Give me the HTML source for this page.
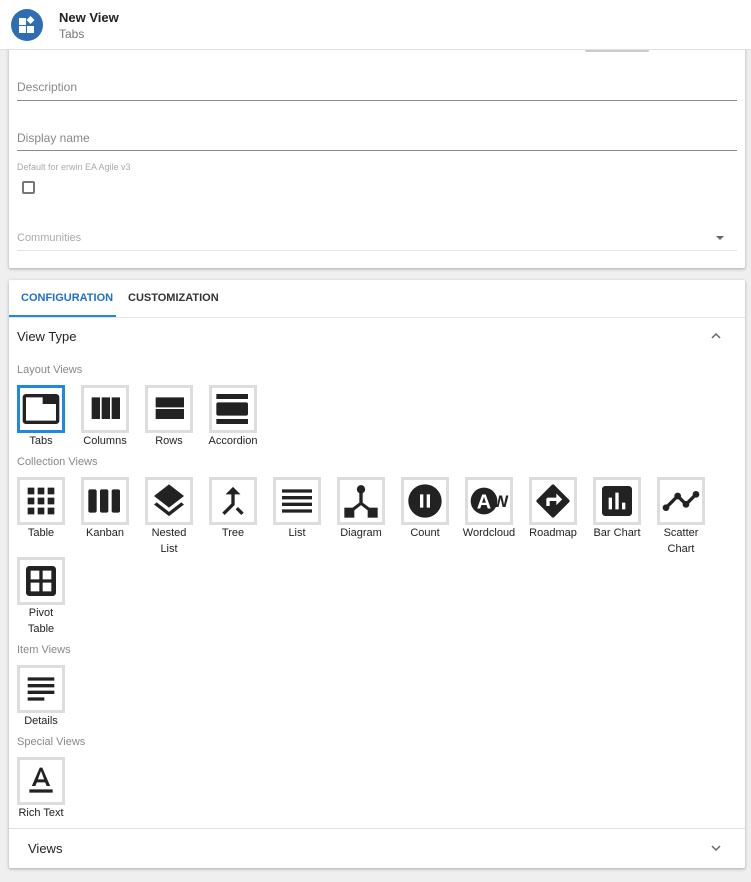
<!DOCTYPE html>
<html><head><meta charset="utf-8">
<style>
*{box-sizing:border-box;margin:0;padding:0}
body{width:751px;height:882px;background:#efefef;font-family:"Liberation Sans",Arial,sans-serif;position:relative;overflow:hidden;color:#212121}
.hdr{position:absolute;left:0;top:0;width:751px;height:50px;background:#fff;border-bottom:1px solid #e0e0e0;z-index:2}
.logo{position:absolute;left:11px;top:9px;width:32px;height:32px;border-radius:50%;background:#2e6db4}
.t1{position:absolute;left:59px;top:10px;font-size:13px;font-weight:bold;color:#222}
.t2{position:absolute;left:59px;top:27px;font-size:12px;color:#777}
.card{position:absolute;left:9px;width:736px;background:#fff;box-shadow:0 1px 3px rgba(0,0,0,.3);border-radius:2px}
.lbl{position:absolute;left:8px;font-size:12px;color:#888}
.line{position:absolute;left:8px;right:8px;height:1px;background:#8a8a8a}
.sec{position:absolute;left:17px;font-size:11px;color:#888}
.tile{position:absolute;width:64px;text-align:center;font-size:11px;color:#222;line-height:16px}
.box{width:48px;height:48px;border:3px solid #ddd;background:#fff;display:flex;align-items:center;justify-content:center;margin-bottom:0}
.box.sel{border-color:#1e88e5}
.box svg{width:40px;height:40px;fill:#222}
</style></head><body>
<div class="hdr">
  <div class="logo"><svg width="32" height="32" viewBox="0 0 32 32"><rect x="8" y="9" width="7" height="7" fill="#fff"/><rect x="8" y="17" width="7" height="7" fill="#fff"/><rect x="16" y="17" width="7" height="7" fill="#fff"/><path d="M19.5 7l4 4-4 4-4-4z" fill="#fff"/></svg></div>
  <div class="t1">New View</div>
  <div class="t2">Tabs</div>
</div>
<div style="position:absolute;left:585px;top:49px;width:64px;height:3px;background:#ccc;border-radius:2px;z-index:1"></div>

<div class="card" style="top:40px;height:228px">
  <div class="lbl" style="top:40px">Description</div>
  <div class="line" style="top:60px"></div>
  <div class="lbl" style="top:91px">Display name</div>
  <div class="line" style="top:110px"></div>
  <div class="lbl" style="top:122px;font-size:9px;color:#aaa">Default for erwin EA Agile v3</div>
  <div style="position:absolute;left:13px;top:141px;width:13px;height:13px;border:2px solid #777;border-radius:2px"></div>
  <div class="lbl" style="top:192px;color:#aaa;font-size:11px">Communities</div>
  <div style="position:absolute;left:707px;top:196px;width:0;height:0;border-left:4px solid transparent;border-right:4px solid transparent;border-top:4px solid #666"></div>
  <div class="line" style="top:210px;background:#e4e4e4"></div>
</div>

<div class="card" style="top:280px;height:588px">
  <div style="position:absolute;left:12px;top:12px;font-size:11px;font-weight:bold;color:#1e6fd0">CONFIGURATION</div>
  <div style="position:absolute;left:119px;top:12px;font-size:11px;font-weight:bold;color:#333">CUSTOMIZATION</div>
  <div style="position:absolute;left:0;top:35px;width:107px;height:2px;background:#1e88e5"></div>
  <div style="position:absolute;left:0;right:0;top:37px;height:1px;background:#e4e4e4"></div>
  <div style="position:absolute;left:8px;top:49px;font-size:13px;color:#222">View Type</div>
  <svg style="position:absolute;left:701px;top:52px" width="12" height="8" viewBox="0 0 12 8"><path d="M2 6l4-4 4 4" stroke="#666" stroke-width="1.5" fill="none"/></svg>
  <div style="position:absolute;left:0;right:0;top:548px;height:1px;background:#e0e0e0"></div>
  <div style="position:absolute;left:19px;top:561px;font-size:13px;color:#222">Views</div>
  <svg style="position:absolute;left:701px;top:564px" width="12" height="8" viewBox="0 0 12 8"><path d="M2 2l4 4 4-4" stroke="#666" stroke-width="1.5" fill="none"/></svg>
</div>

<div class="sec" style="top:364px">Layout Views</div>
<div class="sec" style="top:456px">Collection Views</div>
<div class="sec" style="top:644px">Item Views</div>
<div class="sec" style="top:736px">Special Views</div>

<div class="tile" style="left:17px;top:385px"><div class="box sel"><svg viewBox="0 0 24 24"><path d="M21 3H3c-1.1 0-2 .9-2 2v14c0 1.1.9 2 2 2h18c1.1 0 2-.9 2-2V5c0-1.1-.9-2-2-2zm0 16H3V5h10v4h8v10z"/></svg></div><span style="margin-left:-16px">Tabs</span></div>
<div class="tile" style="left:81px;top:385px"><div class="box"><svg viewBox="0 0 24 24"><path d="M10 18h5V5h-5v13zm-6 0h5V5H4v13zM16 5v13h5V5h-5z"/></svg></div><span style="margin-left:-16px">Columns</span></div>
<div class="tile" style="left:145px;top:385px"><div class="box"><svg viewBox="0 0 24 24"><path d="M4 18h17v-6H4v6zM4 5v6h17V5H4z"/></svg></div><span style="margin-left:-16px">Rows</span></div>
<div class="tile" style="left:209px;top:385px"><div class="box"><svg viewBox="0 0 24 24"><path d="M2 21h19v-3H2v3zM20 8H3c-.55 0-1 .45-1 1v6c0 .55.45 1 1 1h17c.55 0 1-.45 1-1V9c0-.55-.45-1-1-1zM2 3v3h19V3H2z"/></svg></div><span style="margin-left:-16px">Accordion</span></div>

<div class="tile" style="left:17px;top:477px"><div class="box"><svg viewBox="0 0 24 24"><path d="M4 4h4v4H4zm6 0h4v4h-4zm6 0h4v4h-4zM4 10h4v4H4zm6 0h4v4h-4zm6 0h4v4h-4zM4 16h4v4H4zm6 0h4v4h-4zm6 0h4v4h-4z"/></svg></div><span style="margin-left:-16px">Table</span></div>
<div class="tile" style="left:81px;top:477px"><div class="box"><svg viewBox="0 0 24 24"><path d="M6 5H3c-.55 0-1 .45-1 1v12c0 .55.45 1 1 1h3c.55 0 1-.45 1-1V6c0-.55-.45-1-1-1zm14 0h-3c-.55 0-1 .45-1 1v12c0 .55.45 1 1 1h3c.55 0 1-.45 1-1V6c0-.55-.45-1-1-1zm-7 0h-3c-.55 0-1 .45-1 1v12c0 .55.45 1 1 1h3c.55 0 1-.45 1-1V6c0-.55-.45-1-1-1z"/></svg></div><span style="margin-left:-16px">Kanban</span></div>
<div class="tile" style="left:145px;top:477px"><div class="box"><svg viewBox="0 0 24 24"><path d="M11.99 18.54l-7.37-5.73L3 14.07l9 7 9-7-1.63-1.27-7.38 5.74zM12 16l7.36-5.73L21 9l-9-7-9 7 1.63 1.27L12 16z"/></svg></div><span style="display:block;margin-left:-16px">Nested<br>List</span></div>
<div class="tile" style="left:209px;top:477px"><div class="box"><svg viewBox="0 0 24 24"><path d="M17 20.41L18.41 19 15 15.59 13.59 17 17 20.41zM7.5 8H11v5.59L5.59 19 7 20.41l6-6V8h3.5L12 3.5 7.5 8z"/></svg></div><span style="margin-left:-16px">Tree</span></div>
<div class="tile" style="left:273px;top:477px"><div class="box"><svg viewBox="0 0 24 24"><path d="M3 15h18v-2H3v2zm0 4h18v-2H3v2zm0-8h18V9H3v2zm0-6v2h18V5H3z"/></svg></div><span style="margin-left:-16px">List</span></div>
<div class="tile" style="left:337px;top:477px"><div class="box"><svg viewBox="0 0 24 24"><circle cx="12" cy="5" r="2.5"/><path d="M11 6h2v7l6 4.5-1.2 1.5L12 14.5 6.2 19 5 17.5l6-4.5z"/><rect x="2" y="16" width="6" height="6"/><rect x="16" y="16" width="6" height="6"/></svg></div><span style="margin-left:-16px">Diagram</span></div>
<div class="tile" style="left:401px;top:477px"><div class="box"><svg viewBox="0 0 24 24"><path d="M12 2C6.48 2 2 6.48 2 12s4.48 10 10 10 10-4.48 10-10S17.52 2 12 2zm-1 14H9V8h2v8zm4 0h-2V8h2v8z"/></svg></div><span style="margin-left:-16px">Count</span></div>
<div class="tile" style="left:465px;top:477px"><div class="box"><svg viewBox="0 0 24 24"><circle cx="9" cy="12" r="8"/><text x="9" y="16.5" font-size="12" font-weight="bold" fill="#fff" text-anchor="middle" font-family="Liberation Sans">A</text><text x="19" y="15.5" font-size="10" font-weight="bold" fill="#222" text-anchor="middle" font-family="Liberation Sans">W</text></svg></div><span style="margin-left:-16px">Wordcloud</span></div>
<div class="tile" style="left:529px;top:477px"><div class="box"><svg viewBox="0 0 24 24"><path d="M21.71 11.29l-9-9c-.39-.39-1.020-.39-1.41 0l-9 9c-.39.39-.39 1.02 0 1.41l9 9c.39.39 1.02.39 1.41 0l9-9c.39-.38.39-1.01 0-1.41zM14 14.5V12h-4v3H8v-4c0-.55.45-1 1-1h5V7.5l3.5 3.5-3.5 3.5z"/></svg></div><span style="margin-left:-16px">Roadmap</span></div>
<div class="tile" style="left:593px;top:477px"><div class="box"><svg viewBox="0 0 24 24"><path d="M19 3H5c-1.1 0-2 .9-2 2v14c0 1.1.9 2 2 2h14c1.1 0 2-.9 2-2V5c0-1.1-.9-2-2-2zM9 17H7v-7h2v7zm4 0h-2V7h2v10zm4 0h-2v-4h2v4z"/></svg></div><span style="margin-left:-16px">Bar Chart</span></div>
<div class="tile" style="left:657px;top:477px"><div class="box"><svg viewBox="0 0 24 24"><path d="M23 8c0 1.1-.9 2-2 2-.18 0-.35-.02-.51-.07l-3.56 3.550c.05.16.07.34.07.52 0 1.1-.9 2-2 2s-2-.9-2-2c0-.18.02-.36.07-.52l-2.55-2.55c-.16.05-.34.07-.52.07s-.36-.02-.52-.07l-4.55 4.56c.05.16.07.33.07.51 0 1.1-.9 2-2 2s-2-.9-2-2 .9-2 2-2c.18 0 .35.02.51.07l4.56-4.55C8.02 9.36 8 9.18 8 9c0-1.1.9-2 2-2s2 .9 2 2c0 .18-.02.36-.07.52l2.55 2.55c.16-.05.34-.07.52-.07s.36.02.52.07l3.55-3.56C19.02 8.35 19 8.18 19 8c0-1.1.9-2 2-2s2 .9 2 2z"/></svg></div><span style="display:block;margin-left:-16px">Scatter<br>Chart</span></div>

<div class="tile" style="left:17px;top:557px"><div class="box"><svg viewBox="0 0 24 24"><path d="M5 3h14a2 2 0 0 1 2 2v14a2 2 0 0 1-2 2H5a2 2 0 0 1-2-2V5a2 2 0 0 1 2-2zm0.8 2.8v5.2h5.2V5.8zm7.2 0v5.2h5.2V5.8zM5.8 13v5.2h5.2V13zm7.2 0v5.2h5.2V13z" fill-rule="evenodd"/></svg></div><span style="display:block;margin-left:-16px">Pivot<br>Table</span></div>

<div class="tile" style="left:17px;top:665px"><div class="box"><svg viewBox="0 0 24 24"><path d="M14 17H4v2h10v-2zm6-8H4v2h16V9zM4 15h16v-2H4v2zM4 5v2h16V5H4z"/></svg></div><span style="margin-left:-16px">Details</span></div>

<div class="tile" style="left:17px;top:757px"><div class="box"><svg viewBox="0 0 24 24"><path d="M5 17v2h14v-2H5zm4.5-4.2h5l.9 2.2h2.1L12.75 4h-1.5L6.5 15h2.1l.9-2.2zM12 5.98L13.870 11h-3.74L12 5.98z"/></svg></div><span style="margin-left:-16px">Rich Text</span></div>
</body></html>
